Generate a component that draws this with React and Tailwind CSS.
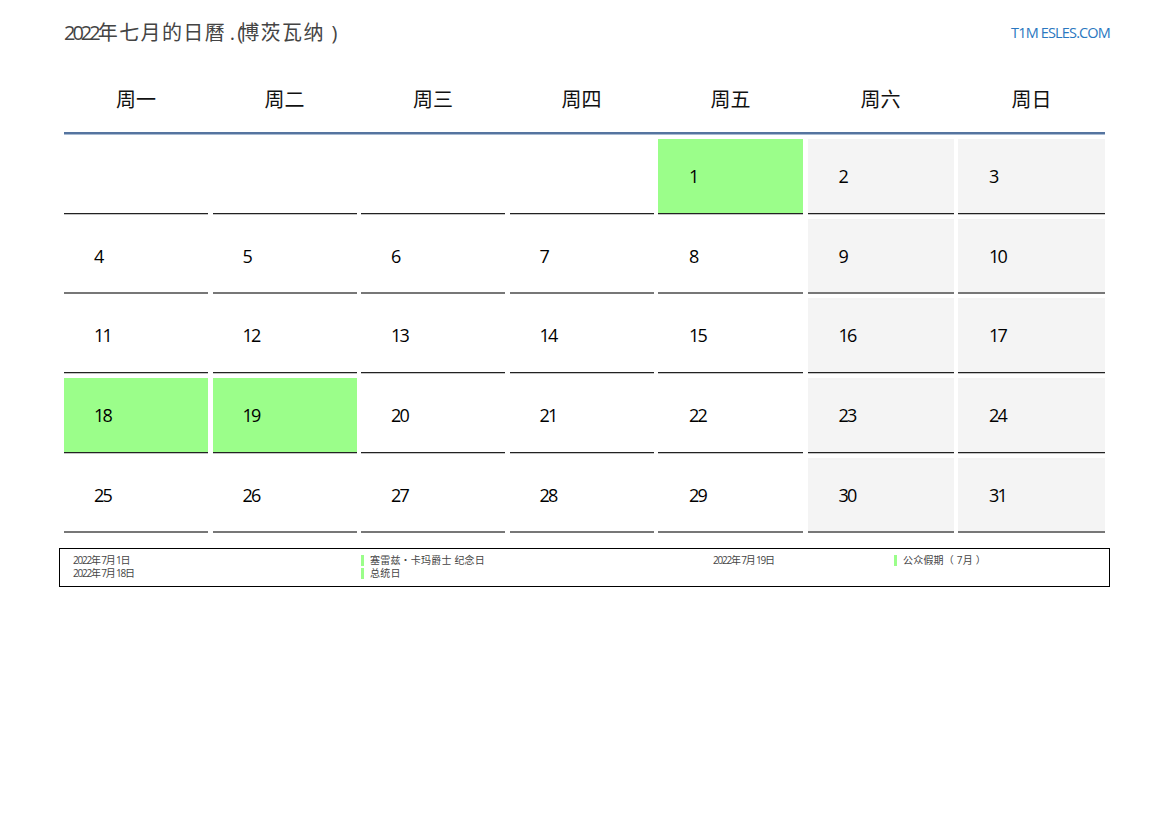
const weeks = [
  [null, null, null, null, 1, 2, 3],
  [4, 5, 6, 7, 8, 9, 10],
  [11, 12, 13, 14, 15, 16, 17],
  [18, 19, 20, 21, 22, 23, 24],
  [25, 26, 27, 28, 29, 30, 31],
];

const dayNames = ["周一", "周二", "周三", "周四", "周五", "周六", "周日"];
const holidays = [1, 18, 19];

const font = "font-['Open_Sans','Noto_Sans_CJK_SC',sans-serif]";
const columns = "grid grid-cols-[144px_144px_144px_144px_145px_146px_147px] gap-x-[4.5px]";

function DayCell({ day, col, row }) {
  const isHoliday = holidays.includes(day);
  const isWeekend = col >= 5;
  const bg = isHoliday ? "bg-[#9bfe8a]" : isWeekend ? "bg-[#f4f4f4]" : "bg-white";
  // the lines fall differently on the pixel grid from row to row
  const border = row === 1 || row === 4 ? "border-b-2 border-[#777777]" : "border-b border-[#222222] shadow-[0_1px_0_#c4c4c4]";
  const inset = col >= 4 ? "pl-[31px]" : "pl-[30px]";
  return (
    <div className={`h-[75px] ${inset} pt-[24px] ${border} ${bg} text-[18px] leading-[26px] tracking-[-1.9px] text-black`}>
      {day}
    </div>
  );
}

function LegendRow({ date, name, dateWidth }) {
  return (
    <div className="flex h-[13px] items-center">
      <span className={`${dateWidth} tracking-[-1.2px] whitespace-pre`}>{date}</span>
      <span className="w-[3px] h-[11px] bg-[#9bfe8a] mr-[6px]" />
      <span className="tracking-[0.2px] whitespace-pre">{name}</span>
    </div>
  );
}

export default function App() {
  return (
    <div className={`w-[1169px] h-[827px] bg-white ${font}`}>
      {/* Title */}
      <div className="flex justify-between items-center pl-[64px] pr-[59px] pt-[19px] h-[46px]">
        <h1 className="text-[20px] leading-[28px] text-[#444444] font-normal whitespace-pre">
          <span className="tracking-[-3px]">2022</span>
          <span className="tracking-[1.4px]">年七月的日曆</span>
          <span className="tracking-[-1.5px]"> . </span>
          <span className="tracking-[-4px]">(</span>
          <span className="tracking-[1.4px]">博茨瓦纳 )</span>
        </h1>
        <span className="text-[14.5px] leading-[20px] tracking-[-0.85px] text-[#2a77c0] whitespace-pre">T1M ESLES.COM</span>
      </div>

      <div className="ml-[64px] w-[1041px]">
        {/* Week header */}
        <div className={`${columns} h-[86px] items-start pt-[40px]`}>
          {dayNames.map((name) => (
            <div key={name} className="text-center text-[20px] leading-[28px] text-[#111111]">{name}</div>
          ))}
        </div>
        <div className="h-[3px] bg-[#55749f] border-b border-[#a9bbd2]" />

        {/* Weeks */}
        <div className="flex flex-col gap-y-[4.7px] mt-[4px]">
          {weeks.map((week, row) => (
            <div key={row} className={columns}>
              {week.map((day, col) => (
                <DayCell key={col} day={day} col={col} row={row} />
              ))}
            </div>
          ))}
        </div>
      </div>

      {/* Holiday legend */}
      <div className="ml-[59px] mt-[15px] w-[1051px] h-[39px] border border-black pl-[13px] pt-[5px] text-[10px] leading-[13px] text-[#444444] flex">
        <div className="w-[640px]">
          <LegendRow date="2022年 7月 1日" name="塞雷兹・卡玛爵士 纪念日" dateWidth="w-[288px]" />
          <LegendRow date="2022年 7月 18日" name="总统日" dateWidth="w-[288px]" />
        </div>
        <div>
          <LegendRow date="2022年 7月 19日" name="公众假期（ 7月 ）" dateWidth="w-[181px]" />
        </div>
      </div>
    </div>
  );
}
